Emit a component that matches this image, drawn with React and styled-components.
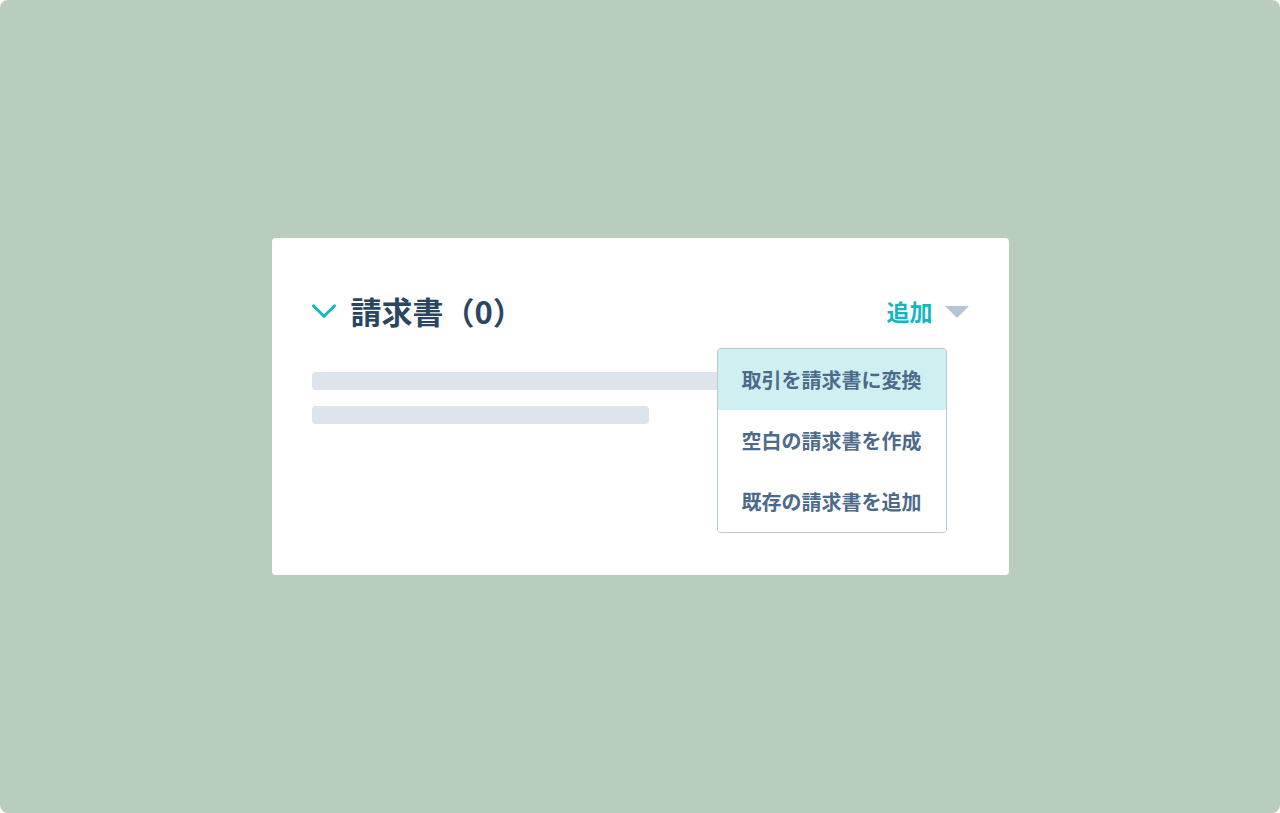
import React from "react";
import styled, { createGlobalStyle } from "styled-components";

const GlobalStyle = createGlobalStyle`
  html, body {
    margin: 0;
    padding: 0;
    background: #ffffff;
  }
  body {
    font-family: "Noto Sans CJK JP", "Noto Sans", sans-serif;
  }
`;

const Fondo = styled.div`
  width: 1280px;
  height: 813px;
  background: #b9cdbf;
  border-radius: 8px;
  display: flex;
  align-items: center;
  justify-content: center;
`;

const Tarjeta = styled.section`
  width: 737px;
  height: 337px;
  box-sizing: border-box;
  background: #ffffff;
  border-radius: 4px;
  padding: 52px 40px 0 40px;
`;

const Cabecalho = styled.header`
  display: flex;
  align-items: center;
  justify-content: space-between;
  height: 42px;
  position: relative;
`;

const Titulo = styled.h2`
  margin: 0;
  display: flex;
  align-items: center;
  gap: 15px;
  font-size: 31px;
  font-weight: 700;
  color: #2b4661;
  line-height: 42px;
`;

const Acao = styled.div`
  display: flex;
  align-items: center;
  gap: 12px;
  font-size: 23px;
  font-weight: 700;
  color: #13b8bd;
  position: relative;
`;

const Triangulo = styled.span`
  width: 0;
  height: 0;
  border-left: 12px solid transparent;
  border-right: 12px solid transparent;
  border-top: 12px solid #b6c5d3;
  margin-top: 1px;
`;

const Menu = styled.ul`
  position: absolute;
  top: 58px;
  right: 22px;
  width: 230px;
  margin: 0;
  padding: 0;
  list-style: none;
  box-sizing: border-box;
  background: #ffffff;
  border: 1px solid #b9c7d5;
  border-radius: 4px;
  overflow: hidden;
  z-index: 2;
`;

const ItemMenu = styled.li`
  height: ${(p) => (p.$ultimo ? "61px" : "61px")};
  display: flex;
  align-items: center;
  justify-content: center;
  font-size: 20px;
  font-weight: 700;
  color: #4c6a8a;
  background: ${(p) => (p.$ativo ? "#cff0f0" : "#ffffff")};
  white-space: nowrap;
`;

const Linhas = styled.div`
  display: flex;
  flex-direction: column;
  gap: 16px;
  margin-top: 40px;
`;

const Barra = styled.div`
  height: 18px;
  width: ${(p) => p.$largura}px;
  background: #dde4ec;
  border-radius: 4px;
`;

function Chevron() {
  return (
    <svg width="24" height="15" viewBox="0 0 24 15" fill="none">
      <path
        d="M1.5 1.8 L12 12.3 L22.5 1.8"
        stroke="#14b8bd"
        strokeWidth="3"
        strokeLinecap="round"
        strokeLinejoin="round"
      />
    </svg>
  );
}

export default function App() {
  return (
    <>
      <GlobalStyle />
      <Fondo>
        <Tarjeta>
          <Cabecalho>
            <Titulo>
              <Chevron />
              <span>請求書（0）</span>
            </Titulo>
            <Acao>
              <span>追加</span>
              <Triangulo />
            </Acao>
            <Menu>
              <ItemMenu $ativo>取引を請求書に変換</ItemMenu>
              <ItemMenu>空白の請求書を作成</ItemMenu>
              <ItemMenu $ultimo>既存の請求書を追加</ItemMenu>
            </Menu>
          </Cabecalho>
          <Linhas>
            <Barra $largura={460} />
            <Barra $largura={337} />
          </Linhas>
        </Tarjeta>
      </Fondo>
    </>
  );
}
